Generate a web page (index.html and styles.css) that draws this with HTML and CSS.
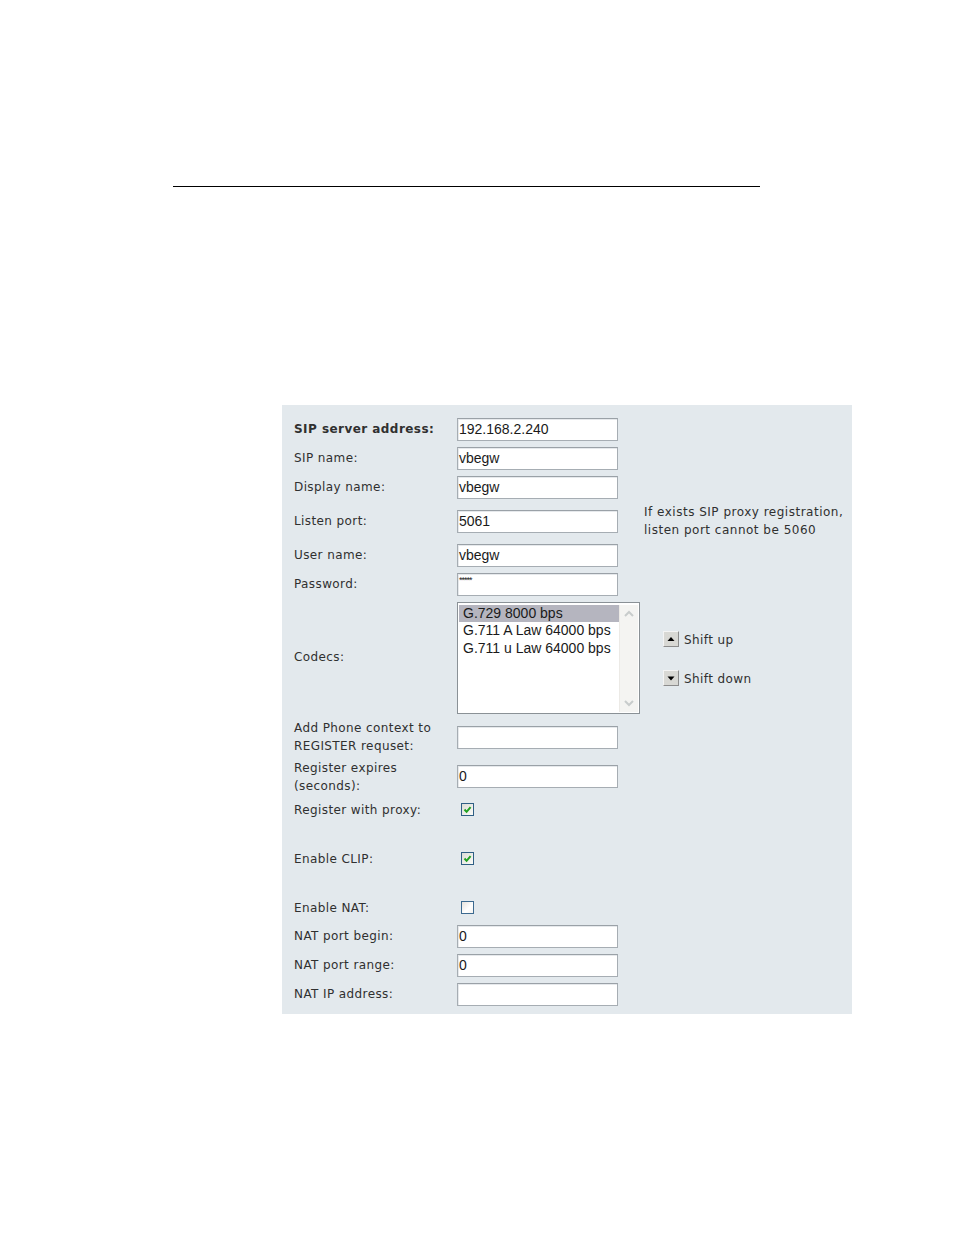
FILE: index.html
```html
<!DOCTYPE html>
<html>
<head>
<meta charset="utf-8">
<link rel="stylesheet" href="styles.css">
</head>
<body>
<div class="page">
  <div class="rule"></div>
  <div class="panel">
    <div class="row h29"><div class="label bold">SIP server address:</div><div class="field"><div class="input">192.168.2.240</div></div></div>
    <div class="row h29"><div class="label">SIP name:</div><div class="field"><div class="input">vbegw</div></div></div>
    <div class="row h29"><div class="label">Display name:</div><div class="field"><div class="input">vbegw</div></div></div>
    <div class="row h38"><div class="label">Listen port:</div><div class="field"><div class="input">5061</div></div><div class="note">If exists SIP proxy registration,<br>listen port cannot be 5060</div></div>
    <div class="row h30"><div class="label">User name:</div><div class="field"><div class="input">vbegw</div></div></div>
    <div class="row h28"><div class="label">Password:</div><div class="field"><div class="input pw">*****</div></div></div>
    <div class="row codecs-row">
      <div class="label">Codecs:</div>
      <div class="field">
        <div class="listbox">
          <div class="items">
            <div class="item sel">G.729 8000 bps</div>
            <div class="item">G.711 A Law 64000 bps</div>
            <div class="item">G.711 u Law 64000 bps</div>
          </div>
          <div class="scroll">
            <svg width="18" height="18" viewBox="0 0 18 18"><path d="M5 11 L9 7 L13 11" fill="none" stroke="#c8cccc" stroke-width="2"/></svg>
            <svg width="18" height="18" viewBox="0 0 18 18"><path d="M5 7 L9 11 L13 7" fill="none" stroke="#c8cccc" stroke-width="2"/></svg>
          </div>
        </div>
      </div>
      <div class="shifts">
        <div class="shift"><span class="btn"><svg width="16" height="16" viewBox="0 0 16 16"><path d="M4.5 10 L8 6 L11.5 10 Z" fill="#000"/></svg></span><span class="stext">Shift up</span></div>
        <div class="shift"><span class="btn"><svg width="16" height="16" viewBox="0 0 16 16"><path d="M4.5 6.5 L8 10.5 L11.5 6.5 Z" fill="#000"/></svg></span><span class="stext">Shift down</span></div>
      </div>
    </div>
    <div class="row h42"><div class="label two">Add Phone context to<br>REGISTER requset:</div><div class="field"><div class="input"></div></div></div>
    <div class="row h37"><div class="label two">Register expires<br>(seconds):</div><div class="field"><div class="input">0</div></div></div>
    <div class="row h49 top"><div class="label">Register with proxy:</div><div class="field"><span class="check on"><svg width="11" height="11" viewBox="0 0 11 11"><path d="M2.5 5.5 L4.6 7.8 L8.6 3.2" fill="none" stroke="#21a121" stroke-width="2"/></svg></span></div></div>
    <div class="row h49 top"><div class="label">Enable CLIP:</div><div class="field"><span class="check on"><svg width="11" height="11" viewBox="0 0 11 11"><path d="M2.5 5.5 L4.6 7.8 L8.6 3.2" fill="none" stroke="#21a121" stroke-width="2"/></svg></span></div></div>
    <div class="row h29 top"><div class="label">Enable NAT:</div><div class="field"><span class="check off"></span></div></div>
    <div class="row h29"><div class="label">NAT port begin:</div><div class="field"><div class="input">0</div></div></div>
    <div class="row h29"><div class="label">NAT port range:</div><div class="field"><div class="input">0</div></div></div>
    <div class="row h29"><div class="label">NAT IP address:</div><div class="field"><div class="input"></div></div></div>
  </div>
</div>
</body>
</html>
```
FILE: styles.css
```css
html, body {
  margin: 0;
  padding: 0;
  background: #ffffff;
}
.page {
  width: 954px;
  height: 1235px;
  padding-top: 186px;
  box-sizing: border-box;
}
.rule {
  margin-left: 173px;
  width: 587px;
  height: 0;
  border-top: 1px solid #000;
}
.panel {
  margin-top: 218px;
  margin-left: 282px;
  width: 570px;
  height: 609px;
  box-sizing: border-box;
  background: #e3e9ed;
  padding: 10px 0 0 12px;
  font-family: "DejaVu Sans", Verdana, sans-serif;
  font-size: 12px;
  color: #303030;
}
.row {
  display: flex;
  align-items: center;
}
.row.top {
  align-items: flex-start;
  padding-top: 8px;
  box-sizing: border-box;
}
.h28 { height: 28px; }
.h29 { height: 29px; }
.h30 { height: 30px; }
.h37 { height: 37px; }
.h38 { height: 38px; }
.h42 { height: 42px; }
.h49 { height: 49px; }
.label {
  width: 163px;
  flex: none;
  letter-spacing: 0.4px;
  line-height: 15px;
}
.label.bold {
  font-weight: bold;
  letter-spacing: 0.45px;
}
.label.two {
  line-height: 18px;
}
.field {
  flex: none;
  width: 187px;
}
.input {
  width: 161px;
  height: 23px;
  box-sizing: border-box;
  background: #fff;
  border: 1px solid #a6adb3;
  border-top-color: #9aa1a7;
  box-shadow: inset 1px 1px 0 #e6e9ec;
  font-family: "Liberation Sans", Arial, sans-serif;
  font-size: 14px;
  line-height: 21px;
  padding-left: 1px;
  color: #1a1a1a;
}
.input.pw {
  font-size: 9px;
  line-height: 12px;
  letter-spacing: -1px;
}
.note {
  line-height: 18px;
  letter-spacing: 0.5px;
  padding-bottom: 2px;
  padding-top: 1px;
  font-size: 12px;
}
.codecs-row {
  height: 118px;
  align-items: center;
}
.listbox {
  margin-top: 1px;
  width: 183px;
  height: 112px;
  box-sizing: border-box;
  background: #fff;
  border: 1px solid #8a9196;
  display: flex;
  padding: 2px 1px 1px 1px;
}
.items {
  flex: 1;
  font-family: "Liberation Sans", Arial, sans-serif;
  font-size: 14px;
  color: #1a1a1a;
}
.item {
  height: 17.5px;
  line-height: 17px;
  padding-left: 4px;
}
.item.sel {
  background: #b5b5bf;
}
.scroll {
  width: 18px;
  flex: none;
  background: #f4f4f2;
  border-left: 1px solid #eceae6;
  display: flex;
  flex-direction: column;
  justify-content: space-between;
}
.scroll svg {
  display: block;
}
.shifts {
  display: flex;
  flex-direction: column;
  gap: 22px;
  margin-left: 19px;
  padding-top: 4px;
}
.shift {
  display: flex;
  align-items: flex-end;
}
.btn {
  width: 16px;
  height: 16px;
  box-sizing: border-box;
  background: #d8d8d4;
  border: 1px solid #f4f4f4;
  border-right-color: #8c8c8c;
  border-bottom-color: #8c8c8c;
  display: flex;
  align-items: center;
  justify-content: center;
  margin-bottom: 1px;
}
.btn svg {
  display: block;
  margin: -1px;
}
.stext {
  margin-left: 5px;
  letter-spacing: 0.4px;
  line-height: 15px;
}
.check {
  display: flex;
  align-items: center;
  justify-content: center;
  width: 13px;
  height: 13px;
  box-sizing: border-box;
  border: 1px solid #2f5f85;
  margin-left: 4px;
  background: linear-gradient(135deg, #dcdcd6, #fbfbf8);
}
.check.off {
  background: linear-gradient(135deg, #e6e2dc, #ffffff 60%, #f4f2ee);
  border-color: #3c6a90;
}
```
